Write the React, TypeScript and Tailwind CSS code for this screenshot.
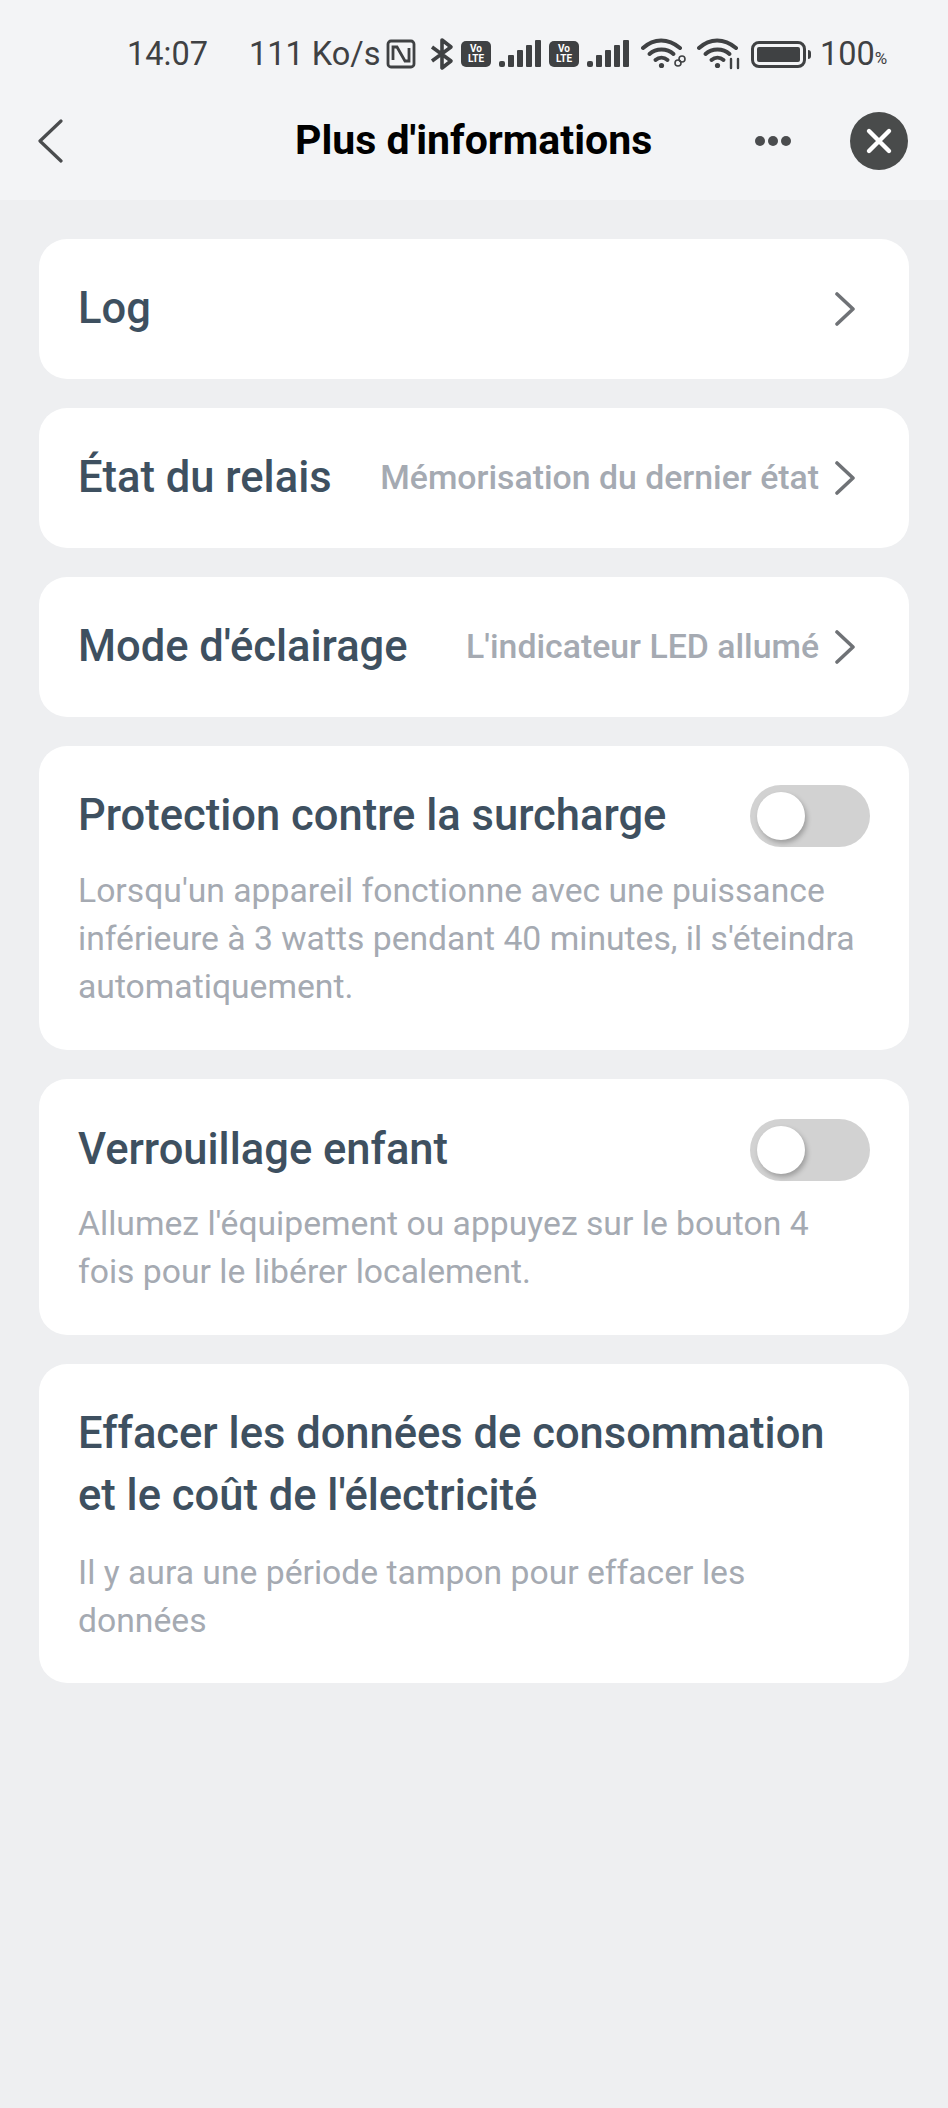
import type { ReactNode } from 'react';

const Signal = ({ className = '' }: { className?: string }) => (
  <svg width="42" height="28" viewBox="0 0 42 28" fill="#3f4143" className={`block ${className}`}>
    <rect x="0" y="21" width="6" height="6" rx="2" />
    <rect x="9" y="15" width="6" height="12" rx="1" />
    <rect x="18" y="10" width="6" height="17" rx="1" />
    <rect x="27" y="5" width="6" height="22" rx="1" />
    <rect x="36" y="0" width="6" height="27" rx="1" />
  </svg>
);

const VoLte = ({ className = '' }: { className?: string }) => (
  <div className={`w-[30px] h-[26px] rounded-[5px] bg-[#3f4143] text-white flex flex-col items-center justify-center text-[10px] leading-[10px] font-bold ${className}`}>
    <span>Vo</span>
    <span>LTE</span>
  </div>
);

const Wifi = ({ children, className = '' }: { children: ReactNode; className?: string }) => (
  <svg width="46" height="32" viewBox="0 0 46 32" fill="none" stroke="#3f4143" strokeWidth="4" strokeLinecap="round" className={className}>
    <path d="M2 10 C13 0 27 0 39 10" />
    <path d="M8.5 16 C15 10 26 10 32.5 16" />
    <path d="M14.5 22 C18 19 23 19 26.5 22" />
    <circle cx="20.5" cy="27.5" r="2.6" fill="#3f4143" stroke="none" />
    {children}
  </svg>
);

const Toggle = () => (
  <div className="w-[120px] h-[62px] rounded-full bg-[#d2d2d2] flex items-center pl-[7px] shrink-0">
    <div className="w-[48px] h-[48px] rounded-full bg-white shadow-[2px_3px_5px_rgba(0,0,0,0.25)]" />
  </div>
);

const Chevron = () => (
  <svg width="22" height="34" viewBox="0 0 22 34" fill="none" stroke="#6f7276" strokeWidth="3.6" strokeLinecap="round" strokeLinejoin="round" className="ml-[15px] shrink-0">
    <path d="M3 2 L19 17 L3 32" />
  </svg>
);

const rows = [
  { title: 'Log', value: '' },
  { title: 'État du relais', value: 'Mémorisation du dernier état' },
  { title: "Mode d'éclairage", value: "L'indicateur LED allumé" },
];

const App = () => {
  return (
    <div className="w-[948px] h-[2108px] bg-[#eeeff1] overflow-hidden" style={{ fontFamily: 'Roboto, sans-serif' }}>
      {/* Status bar + nav */}
      <div className="h-[200px] bg-[#f3f4f6] px-[39px]">
        <div className="h-[100px] flex items-center pl-[88px] pt-[8px] text-[#3f4143] text-[32.5px]">
          <span className="w-[122px]">14:07</span>
          <span className="w-[129px] whitespace-nowrap">111 Ko/s</span>
          <svg width="30" height="30" viewBox="0 0 30 30" fill="none" stroke="#3f4143" strokeWidth="2.8" className="ml-[8px]">
            <rect x="2" y="2" width="26" height="26" rx="3" />
            <path d="M7 21 V8 H11 L19 22 H23 V9" />
          </svg>
          <svg width="24" height="34" viewBox="0 0 24 34" fill="none" stroke="#3f4143" strokeWidth="3.6" strokeLinejoin="round" className="ml-[14px]">
            <path d="M2 10 L21 24 L12 31 V3 L21 10 L2 24" />
          </svg>
          <VoLte className="ml-[7px]" />
          <Signal className="ml-[8px]" />
          <VoLte className="ml-[8px]" />
          <Signal className="ml-[8px]" />
          <Wifi className="ml-[12px]">
            <circle cx="37" cy="25" r="3" strokeWidth="1.6" />
            <circle cx="41" cy="21" r="3" strokeWidth="1.6" />
          </Wifi>
          <Wifi className="ml-[10px]">
            <path d="M34 21 V30 M41 21 V30" strokeWidth="2.4" />
          </Wifi>
          <div className="flex items-center ml-[8px]">
            <div className="w-[55px] h-[27px] rounded-[8px] border-[3px] border-[#3f4143] p-[3px]">
              <div className="w-full h-full rounded-[2px] bg-[#3f4143]" />
            </div>
            <div className="w-[3px] h-[9px] ml-[2px] rounded-r-sm bg-[#3f4143]" />
          </div>
          <span className="ml-[9px]">100</span>
          <span className="text-[17px] pt-[9px]">%</span>
        </div>
        <div className="h-[100px] flex items-center relative -mt-[9px]">
          <svg width="27" height="44" viewBox="0 0 27 44" fill="none" stroke="#4a4c4e" strokeWidth="3.2" strokeLinecap="round" strokeLinejoin="round" className="-ml-[2px]">
            <path d="M24 2 L3 22 L24 42" />
          </svg>
          <div className="absolute left-[256px] text-[41px] font-bold text-black whitespace-nowrap">Plus d'informations</div>
          <div className="ml-auto flex items-center gap-[58px]">
            <div className="flex gap-[3px] w-[38px]">
              <div className="w-[10px] h-[10px] rounded-full bg-[#4a4c4e]" />
              <div className="w-[10px] h-[10px] rounded-full bg-[#4a4c4e]" />
              <div className="w-[10px] h-[10px] rounded-full bg-[#4a4c4e]" />
            </div>
            <div className="w-[58px] h-[58px] rounded-full bg-[#494b4b] flex items-center justify-center -translate-x-[1px]">
              <svg width="28" height="28" viewBox="0 0 28 28" stroke="#fff" strokeWidth="4.4" strokeLinecap="round">
                <path d="M4 4 L24 24 M24 4 L4 24" />
              </svg>
            </div>
          </div>
        </div>
      </div>

      {/* Cards */}
      <div className="px-[39px] pt-[39px] flex flex-col gap-[29px]">
        {rows.map((r) => (
          <div key={r.title} className="h-[140px] rounded-[28px] bg-white pl-[39px] pr-[53px] flex items-center">
            <span className="text-[43.5px] font-medium text-[#3e5060]">{r.title}</span>
            <span className="ml-auto text-[33.8px] font-medium text-[#a5aab2]">{r.value}</span>
            <Chevron />
          </div>
        ))}

        <div className="h-[304px] rounded-[28px] bg-white px-[39px] pt-[37px]">
          <div className="flex items-center justify-between">
            <span className="text-[43.5px] font-medium text-[#3e5060]">Protection contre la surcharge</span>
            <Toggle />
          </div>
          <p className="mt-[19px] text-[33.7px] leading-[48px] text-[#a5aab2]">
            Lorsqu'un appareil fonctionne avec une puissance inférieure à 3 watts pendant 40 minutes, il s'éteindra automatiquement.
          </p>
        </div>

        <div className="h-[256px] rounded-[28px] bg-white px-[39px] pt-[38px]">
          <div className="flex items-center justify-between">
            <span className="text-[43.5px] font-medium text-[#3e5060]">Verrouillage enfant</span>
            <Toggle />
          </div>
          <p className="mt-[18px] text-[33.7px] leading-[48px] text-[#a5aab2]">
            Allumez l'équipement ou appuyez sur le bouton 4 fois pour le libérer localement.
          </p>
        </div>

        <div className="h-[319px] rounded-[28px] bg-white px-[39px] pt-[39px]">
          <div className="text-[43.5px] leading-[62px] font-medium text-[#3e5060]">
            Effacer les données de consommation et le coût de l'électricité
          </div>
          <p className="mt-[22px] text-[33.7px] leading-[48px] text-[#a5aab2]">
            Il y aura une période tampon pour effacer les données
          </p>
        </div>
      </div>
    </div>
  );
};

export default App;
